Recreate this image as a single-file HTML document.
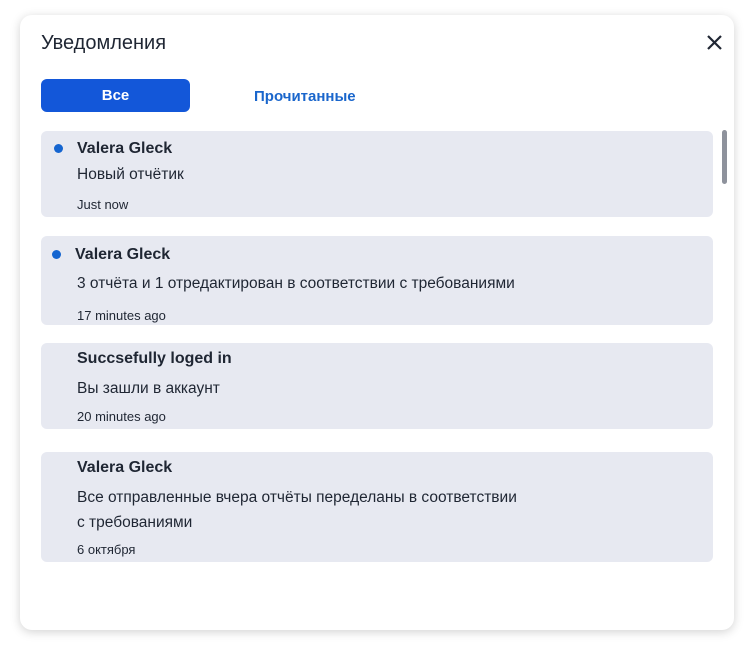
<!DOCTYPE html>
<html><head><meta charset="utf-8"><style>
body{margin:0;width:754px;height:656px;background:#fff;font-family:"Liberation Sans",sans-serif;color:#1f2633;position:relative;overflow:hidden}
.panel{position:absolute;left:20px;top:15px;width:714px;height:615px;background:#fff;border-radius:12px;box-shadow:0 2px 10px rgba(0,0,0,.18)}
.title{position:absolute;left:41px;top:32px;font-size:20px;color:#1f2633}
.x{position:absolute;left:706px;top:34px}
.btn{position:absolute;left:41px;top:79px;width:149px;height:33px;background:#1357d9;border-radius:6px;color:#fff;font-size:15px;font-weight:bold;text-align:center;line-height:33px}
.tab2{position:absolute;left:254px;top:88px;color:#1a66cc;font-size:15px;font-weight:bold}
.card{position:absolute;left:41px;width:672px;background:#e7e9f1;border-radius:6px}
.t{position:absolute;white-space:nowrap}
.n{font-weight:bold;font-size:16px}
.b{font-size:15.5px}
.s{font-size:13px}
.dot{position:absolute;width:9px;height:9px;border-radius:50%;background:#1565d0}
.sb{position:absolute;left:722px;top:130px;width:5px;height:54px;border-radius:3px;background:#8e929c}
</style></head><body>
<div class="panel"></div>
<div class="title">Уведомления</div>
<svg class="x" width="17" height="17" viewBox="0 0 17 17"><path d="M2 2L15 15M15 2L2 15" stroke="#1f2633" stroke-width="2.2"/></svg>
<div class="btn">Все</div>
<div class="tab2">Прочитанные</div>
<div class="card" style="top:131px;height:86px"></div>
<div class="card" style="top:236px;height:89px"></div>
<div class="card" style="top:343px;height:86px"></div>
<div class="card" style="top:452px;height:110px"></div>
<div class="sb"></div>
<div class="dot" style="left:54px;top:144px"></div>
<div class="t n" style="left:77px;top:140px">Valera Gleck</div>
<div class="t b" style="left:77px;top:166px">Новый отчётик</div>
<div class="t s" style="left:77px;top:197px">Just now</div>
<div class="dot" style="left:52px;top:250px"></div>
<div class="t n" style="left:75px;top:246px">Valera Gleck</div>
<div class="t b" style="left:77px;top:275px">3 отчёта и 1 отредактирован в соответствии с требованиями</div>
<div class="t s" style="left:77px;top:308px">17 minutes ago</div>
<div class="t n" style="left:77px;top:350px">Succsefully loged in</div>
<div class="t b" style="left:77px;top:380px">Вы зашли в аккаунт</div>
<div class="t s" style="left:77px;top:409px">20 minutes ago</div>
<div class="t n" style="left:77px;top:459px">Valera Gleck</div>
<div class="t b" style="left:77px;top:489px">Все отправленные вчера отчёты переделаны в соответствии</div>
<div class="t b" style="left:77px;top:514px">с требованиями</div>
<div class="t s" style="left:77px;top:542px">6 октября</div>
</body></html>
